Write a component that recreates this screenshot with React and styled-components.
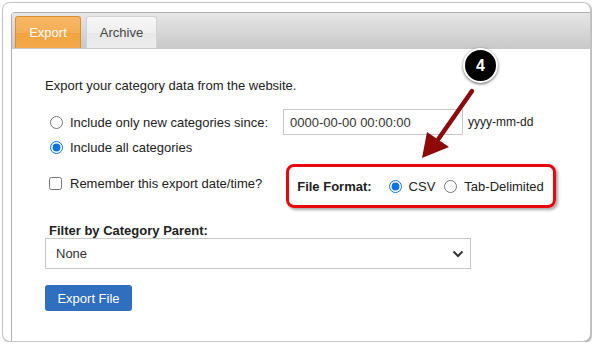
import React from "react";
import styled, { createGlobalStyle } from "styled-components";

const Global = createGlobalStyle`
  html, body { margin: 0; padding: 0; background: #fff; }
  body { font-family: "Liberation Sans", Arial, sans-serif; font-size: 13px; color: #222; }
  * { box-sizing: border-box; }
`;

const Card = styled.div`
  position: relative;
  margin: 2px 0 0 2px;
  width: 589px;
  height: 340px;
  border: 1px solid #c4c4c4;
  border-radius: 8px;
  background: #fff;
  box-shadow: 1px 1px 2px rgba(0, 0, 0, 0.35);
  overflow: hidden;
  padding: 9px 0 0 8px;
`;

const Widget = styled.div`
  border-left: 1px solid #b0b0b0;
  border-top: 1px solid #b0b0b0;
  border-top-left-radius: 4px;
  height: 100%;
`;

const TabBar = styled.div`
  display: flex;
  align-items: flex-end;
  gap: 5px;
  height: 36px;
  padding: 3px 0 0 3px;
  background: linear-gradient(#e6e6e6, #c9c9c9);
  border-bottom: 1px solid #c9c9c9;
`;

const Tab = styled.div`
  height: 32px;
  display: flex;
  align-items: center;
  justify-content: center;
  width: ${(p) => p.$w}px;
  border: 1px solid ${(p) => (p.$active ? "#d88f32" : "#d2d2d2")};
  border-bottom: none;
  border-radius: 3px 3px 0 0;
  font-size: 13px;
  color: ${(p) => (p.$active ? "#fff" : "#444")};
  background: ${(p) =>
    p.$active
      ? "linear-gradient(#f7b866 0%, #f5ae55 50%, #f2a43f 51%, #f3a84a 100%)"
      : "linear-gradient(#f6f6f6 0%, #efefef 50%, #e8e8e8 51%, #ececec 100%)"};
`;

const Content = styled.div`
  padding: 29px 0 0 33px;
  display: flex;
  flex-direction: column;
`;

const Intro = styled.div`
  font-size: 13px;
  color: #222;
  line-height: 15px;
`;

const Row = styled.div`
  display: flex;
  align-items: center;
  height: ${(p) => p.$h || 24}px;
  margin-top: ${(p) => p.$mt || 0}px;
`;

const Radio = styled.input.attrs({ type: "radio" })`
  width: 13px;
  height: 13px;
  margin: 0 7px 0 ${(p) => p.$ml ?? 5}px;
  accent-color: #0b74e5;
`;

const Check = styled.input.attrs({ type: "checkbox" })`
  width: 13px;
  height: 13px;
  margin: 0 8px 0 4px;
`;

const Label = styled.span`
  font-size: 13px;
  color: #222;
  white-space: nowrap;
  font-weight: ${(p) => (p.$bold ? 700 : 400)};
`;

const DateInput = styled.div`
  margin-left: 15px;
  width: 180px;
  height: 26px;
  border: 1px solid #c9c9c9;
  display: flex;
  align-items: center;
  padding-left: 6px;
  font-size: 13px;
  color: #333;
`;

const Hint = styled.span`
  margin-left: 5px;
  font-size: 12px;
  color: #222;
`;

const FormatBox = styled.div`
  display: flex;
  align-items: center;
  margin: 6px 0 0 24px;
  width: 270px;
  height: 44px;
  border: 3px solid #e8060c;
  border-radius: 8px;
  padding-left: 8px;
  box-shadow: 2px 2px 3px rgba(0, 0, 0, 0.35);
`;

const FilterLabel = styled.div`
  margin: 18px 0 0 4px;
  font-weight: 700;
  font-size: 13px;
  color: #222;
  line-height: 15px;
`;

const Select = styled.div`
  width: 426px;
  height: 31px;
  border: 1px solid #c9c9c9;
  display: flex;
  align-items: center;
  justify-content: space-between;
  padding: 0 6px 0 10px;
  font-size: 13px;
  color: #333;
`;

const Button = styled.button`
  margin-top: 16px;
  width: 87px;
  height: 26px;
  border: none;
  border-radius: 3px;
  background: #2f6fbe;
  color: #fff;
  font-family: "Liberation Sans", Arial, sans-serif;
  font-size: 13px;
  padding: 0;
`;

const Overlay = styled.svg`
  position: absolute;
  left: 0;
  top: 0;
  pointer-events: none;
`;

const Badge = styled.div`
  position: absolute;
  left: 460px;
  top: 45px;
  width: 35px;
  height: 35px;
  border-radius: 50%;
  background: #000;
  border: 2px solid #fff;
  box-shadow: 0 1px 3px rgba(0, 0, 0, 0.6);
  color: #fff;
  font-weight: 700;
  font-size: 16px;
  display: flex;
  align-items: center;
  justify-content: center;
`;

export default function App() {
  return (
    <>
      <Global />
      <Card>
        <Widget>
          <TabBar>
            <Tab $active $w={66}>Export</Tab>
            <Tab $w={71}>Archive</Tab>
          </TabBar>
          <Content>
            <Intro>Export your category data from the website.</Intro>
            <Row $h={26} $mt={16}>
              <Radio name="scope" />
              <Label>Include only new categories since:</Label>
              <DateInput>0000-00-00 00:00:00</DateInput>
              <Hint>yyyy-mm-dd</Hint>
            </Row>
            <Row $h={24}>
              <Radio name="scope" defaultChecked />
              <Label>Include all categories</Label>
            </Row>
            <Row $h={44} $mt={2}>
              <Check />
              <Label>Remember this export date/time?</Label>
              <FormatBox>
                <Label $bold>File Format:</Label>
                <Radio name="fmt" $ml={17} defaultChecked />
                <Label>CSV</Label>
                <Radio name="fmt" $ml={9} />
                <Label>Tab-Delimited</Label>
              </FormatBox>
            </Row>
            <FilterLabel>Filter by Category Parent:</FilterLabel>
            <Select>
              <span>None</span>
              <svg width="12" height="8" viewBox="0 0 12 8">
                <path d="M1.5 1.5 L6 6 L10.5 1.5" fill="none" stroke="#333" strokeWidth="2" />
              </svg>
            </Select>
            <Button>Export File</Button>
          </Content>
        </Widget>
        <Overlay width="589" height="340" viewBox="2 2 589 340">
          <line x1="471" y1="90" x2="436" y2="140" stroke="#8e0a0a" strokeWidth="4.5" strokeLinecap="round" />
          <polygon points="426,131 448,146 421,157" fill="#8e0a0a" />
        </Overlay>
        <Badge>4</Badge>
      </Card>
    </>
  );
}
